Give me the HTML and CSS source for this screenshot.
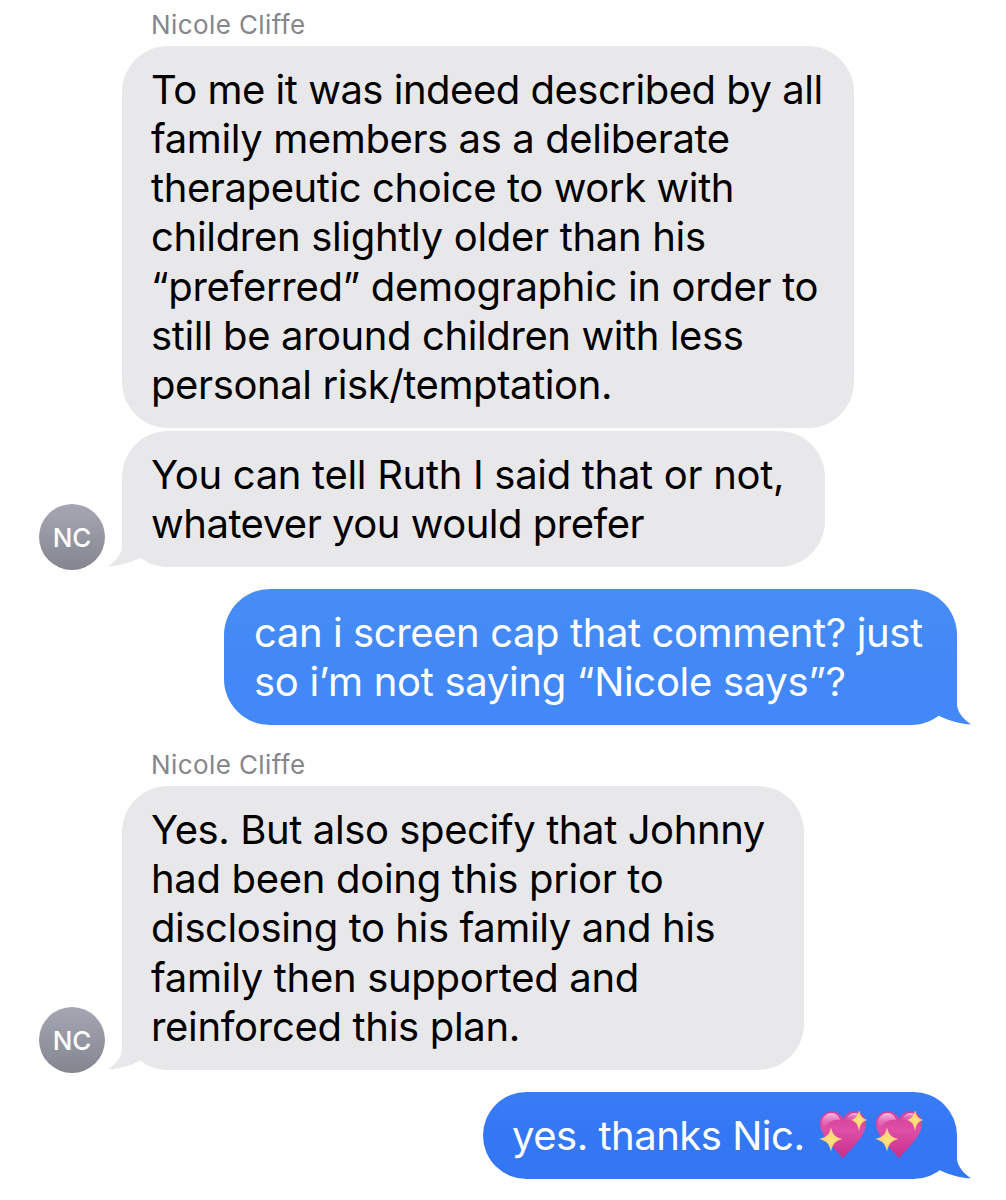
FILE: index.html
```
<!DOCTYPE html>
<html lang="en">
<head>
  <meta charset="UTF-8">
  <meta name="viewport" content="width=device-width, initial-scale=1.0">
  <title>Messages</title>
  <link rel="stylesheet" href="styles.css">
</head>
<body>
  <!-- shared shapes -->
  <svg class="defs" width="0" height="0" aria-hidden="true">
    <defs>
      <linearGradient id="heartFill" x1="0" y1="0" x2="0" y2="1">
        <stop offset="0" stop-color="#d23f9a"/>
        <stop offset="0.4" stop-color="#de4fa6"/>
        <stop offset="1" stop-color="#c72c8a"/>
      </linearGradient>
      <linearGradient id="shine" x1="0" y1="0" x2="0" y2="1">
        <stop offset="0" stop-color="#fbc4e8" stop-opacity="0.95"/>
        <stop offset="1" stop-color="#ea74be" stop-opacity="0"/>
      </linearGradient>
      <radialGradient id="starFill">
        <stop offset="0" stop-color="#ffe67a"/>
        <stop offset="1" stop-color="#fbc878"/>
      </radialGradient>
      <symbol id="tail" viewBox="0 0 40 48">
        <path d="M14 2 V28 C13.500 35 8 42 0 47.300 C10 47.500 22 43.500 32 39 Z"/>
      </symbol>
      <symbol id="heart" viewBox="0 0 48 50">
        <path d="M24 48.500 C20 42 1 27 1 14 C1 6 6 1.500 12.500 1.500 C18 1.500 22 4 24 9 C26 4 30 1.500 35.500 1.500 C42 1.500 47 6 47 14 C47 27 28 42 24 48.500 Z" fill="url(#heartFill)"/>
        <path d="M3 14 C3 7 7 3 12.500 3 C17 3 20 6 21 10 C15 9 8 12 4 20 Z" fill="url(#shine)"/>
        <path d="M27 10 C28 6 31 3 36 3 C38 3 40 4 41 5 L34 11 Z" fill="url(#shine)"/>
        <path d="M40 0 C41.500 6.500 43 8 48 10 C43 12 41.500 13.500 40 21 C38.500 13.500 37 12 32 10 C37 8 38.500 6.500 40 0 Z" fill="url(#starFill)"/>
        <path d="M12 17.500 C14 25 16 27 23.500 29 C16 31 14 33.500 12 41.500 C10 33.500 8 31 0 29 C8 27 10 25 12 17.500 Z" fill="url(#starFill)"/>
      </symbol>
    </defs>
  </svg>

  <main class="chat">
    <div class="sender">Nicole Cliffe</div>
    <div class="row">
      <div class="avatar-slot"></div>
      <div class="bubble received">
        <p><span class="tight">To me it was indeed described by all</span><br>family members as a deliberate<br>therapeutic choice to work with<br><span class="loose">children slightly older than his</span><br><span class="loose">“preferred” demographic in order to</span><br>still be around children with less<br>personal risk/temptation.</p>
      </div>
    </div>
    <div class="row follow">
      <div class="avatar-slot"><div class="avatar">NC</div></div>
      <div class="bubble received medium">
        <p><span class="loose">You can tell Ruth I said that or not,</span><br><span class="tight">whatever you would prefer</span></p>
        <svg class="tail"><use href="#tail"/></svg>
      </div>
    </div>
    <div class="row mine">
      <div class="bubble sent">
        <p>can i screen cap that comment? just<br><span class="loose">so i’m not saying “Nicole says”?</span></p>
        <svg class="tail"><use href="#tail"/></svg>
      </div>
    </div>
    <div class="sender later">Nicole Cliffe</div>
    <div class="row">
      <div class="avatar-slot"><div class="avatar">NC</div></div>
      <div class="bubble received narrow">
        <p>Yes. But also specify that Johnny<br><span class="loose">had been doing this prior to</span><br>disclosing to his family and his<br><span class="loose">family then supported and</span><br><span class="loose">reinforced this plan.</span></p>
        <svg class="tail"><use href="#tail"/></svg>
      </div>
    </div>
    <div class="row mine">
      <div class="bubble sent last">
        <p><span class="tight">yes. thanks Nic.</span></p>
        <svg class="heart" role="img" aria-label="sparkling heart"><use href="#heart"/></svg>
        <svg class="heart" role="img" aria-label="sparkling heart"><use href="#heart"/></svg>
        <svg class="tail"><use href="#tail"/></svg>
      </div>
    </div>
  </main>
</body>
</html>
```
FILE: styles.css
```
* {
  box-sizing: border-box;
}
body {
  margin: 0;
  background: #fff;
  color: #000;
  font-family: Inter, Roboto, "Liberation Sans", sans-serif;
}
.defs {
  position: absolute;
}
.chat {
  display: flex;
  flex-direction: column;
  height: 1200px;
  padding: 9px 49px 0 39px;
}
.sender {
  height: 37px;
  padding-left: 112px;
  color: #86868b;
  font-size: 26px;
  line-height: 32px;
  letter-spacing: 0.4px;
}
.sender.later {
  margin-top: 24px;
}
.row {
  display: flex;
  align-items: flex-end;
}
.row.follow {
  margin-top: 3px;
}
.row.mine {
  justify-content: flex-end;
  margin-top: 22px;
}
.avatar-slot {
  flex: none;
  width: 83px;
  height: 66px;
  margin-bottom: -3px;
}
.avatar {
  width: 66px;
  height: 66px;
  border-radius: 50%;
  background: linear-gradient(#a5a8b4, #83868f);
  color: #fff;
  font-size: 26px;
  font-weight: 500;
  line-height: 67px;
  text-align: center;
}
.bubble {
  position: relative;
  width: 732px;
  padding: 18.500px 29px;
  border-radius: 46px;
  font-size: 40px;
  line-height: 49.300px;
  letter-spacing: -0.400px;
  white-space: nowrap;
}
.bubble p {
  margin: 0;
}
.tight {
  letter-spacing: -0.490px;
}
.loose {
  letter-spacing: -0.310px;
}
.received {
  background: #e8e8ea;
  fill: #e8e8ea;
}
.medium {
  width: 703px;
}
.narrow {
  width: 682px;
}
.sent {
  width: 733px;
  padding: 19px 30px;
  background: linear-gradient(#468df6, #4288f6 65%);
  color: #fff;
  fill: #4288f6;
}
.last {
  display: flex;
  align-items: center;
  width: 474px;
  padding: 18.500px 29px;
  background: linear-gradient(#387cf6, #3377f4 50%);
  fill: #3377f4;
}
.tail {
  position: absolute;
  left: -14px;
  bottom: 0;
  width: 40px;
  height: 48px;
}
.sent .tail {
  left: auto;
  right: -14px;
  transform: scaleX(-1);
}
.heart {
  width: 48px;
  height: 50px;
  margin-left: 8px;
}
.last p {
  width: 299px;
}
```
